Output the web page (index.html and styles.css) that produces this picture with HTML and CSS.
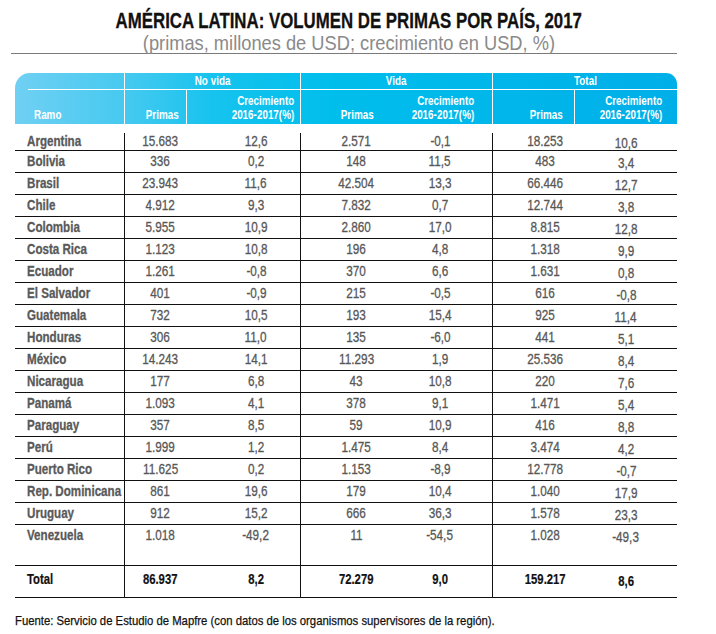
FILE: index.html
```html
<!DOCTYPE html>
<html lang="es">
<head>
<meta charset="utf-8">
<title>América Latina: volumen de primas por país, 2017</title>
<link rel="stylesheet" href="styles.css">
</head>
<body>
<div class="page">
  <header class="title-block">
    <h1 class="title"><span class="t">AMÉRICA LATINA: VOLUMEN DE PRIMAS POR PAÍS, 2017</span></h1>
    <p class="subtitle"><span class="t">(primas, millones de USD; crecimiento en USD, %)</span></p>
  </header>

  <div class="table">
    <div class="thead">
      <div class="h1 h-blank"></div>
      <div class="h1 h-group h-nv"><span class="t">No vida</span></div>
      <div class="h1 h-group h-v"><span class="t">Vida</span></div>
      <div class="h1 h-group h-t"><span class="t">Total</span></div>

      <div class="h2 h-ramo"><span class="t tl">Ramo</span></div>
      <div class="h2 h-div h-prim-nv"><span class="t tr">Primas</span></div>
      <div class="h2 h-div h-crec-nv"><span class="t tr">Crecimiento<br>2016-2017(%)</span></div>
      <div class="h2 h-div h-vida">
        <span class="h-prim-v"><span class="t tr">Primas</span></span>
        <span class="h-crec-v"><span class="t tr">Crecimiento<br>2016-2017(%)</span></span>
      </div>
      <div class="h2 h-div h-prim-t"><span class="t tr">Primas</span></div>
      <div class="h2 h-div h-crec-t"><span class="t tr">Crecimiento<br>2016-2017(%)</span></div>
    </div>

    <div class="tbody">
      <div class="row first"><span class="c name"><span class="t tl">Argentina</span></span><span class="c p1 sep"><span class="t">15.683</span></span><span class="c g1"><span class="t">12,6</span></span><span class="c p2 sep"><span class="t">2.571</span></span><span class="c g2"><span class="t">-0,1</span></span><span class="c p3 sep"><span class="t">18.253</span></span><span class="c g3"><span class="t">10,6</span></span></div>
      <div class="row"><span class="c name"><span class="t tl">Bolivia</span></span><span class="c p1 sep"><span class="t">336</span></span><span class="c g1"><span class="t">0,2</span></span><span class="c p2 sep"><span class="t">148</span></span><span class="c g2"><span class="t">11,5</span></span><span class="c p3 sep"><span class="t">483</span></span><span class="c g3"><span class="t">3,4</span></span></div>
      <div class="row"><span class="c name"><span class="t tl">Brasil</span></span><span class="c p1 sep"><span class="t">23.943</span></span><span class="c g1"><span class="t">11,6</span></span><span class="c p2 sep"><span class="t">42.504</span></span><span class="c g2"><span class="t">13,3</span></span><span class="c p3 sep"><span class="t">66.446</span></span><span class="c g3"><span class="t">12,7</span></span></div>
      <div class="row"><span class="c name"><span class="t tl">Chile</span></span><span class="c p1 sep"><span class="t">4.912</span></span><span class="c g1"><span class="t">9,3</span></span><span class="c p2 sep"><span class="t">7.832</span></span><span class="c g2"><span class="t">0,7</span></span><span class="c p3 sep"><span class="t">12.744</span></span><span class="c g3"><span class="t">3,8</span></span></div>
      <div class="row"><span class="c name"><span class="t tl">Colombia</span></span><span class="c p1 sep"><span class="t">5.955</span></span><span class="c g1"><span class="t">10,9</span></span><span class="c p2 sep"><span class="t">2.860</span></span><span class="c g2"><span class="t">17,0</span></span><span class="c p3 sep"><span class="t">8.815</span></span><span class="c g3"><span class="t">12,8</span></span></div>
      <div class="row"><span class="c name"><span class="t tl">Costa Rica</span></span><span class="c p1 sep"><span class="t">1.123</span></span><span class="c g1"><span class="t">10,8</span></span><span class="c p2 sep"><span class="t">196</span></span><span class="c g2"><span class="t">4,8</span></span><span class="c p3 sep"><span class="t">1.318</span></span><span class="c g3"><span class="t">9,9</span></span></div>
      <div class="row"><span class="c name"><span class="t tl">Ecuador</span></span><span class="c p1 sep"><span class="t">1.261</span></span><span class="c g1"><span class="t">-0,8</span></span><span class="c p2 sep"><span class="t">370</span></span><span class="c g2"><span class="t">6,6</span></span><span class="c p3 sep"><span class="t">1.631</span></span><span class="c g3"><span class="t">0,8</span></span></div>
      <div class="row"><span class="c name"><span class="t tl">El Salvador</span></span><span class="c p1 sep"><span class="t">401</span></span><span class="c g1"><span class="t">-0,9</span></span><span class="c p2 sep"><span class="t">215</span></span><span class="c g2"><span class="t">-0,5</span></span><span class="c p3 sep"><span class="t">616</span></span><span class="c g3"><span class="t">-0,8</span></span></div>
      <div class="row"><span class="c name"><span class="t tl">Guatemala</span></span><span class="c p1 sep"><span class="t">732</span></span><span class="c g1"><span class="t">10,5</span></span><span class="c p2 sep"><span class="t">193</span></span><span class="c g2"><span class="t">15,4</span></span><span class="c p3 sep"><span class="t">925</span></span><span class="c g3"><span class="t">11,4</span></span></div>
      <div class="row"><span class="c name"><span class="t tl">Honduras</span></span><span class="c p1 sep"><span class="t">306</span></span><span class="c g1"><span class="t">11,0</span></span><span class="c p2 sep"><span class="t">135</span></span><span class="c g2"><span class="t">-6,0</span></span><span class="c p3 sep"><span class="t">441</span></span><span class="c g3"><span class="t">5,1</span></span></div>
      <div class="row"><span class="c name"><span class="t tl">México</span></span><span class="c p1 sep"><span class="t">14.243</span></span><span class="c g1"><span class="t">14,1</span></span><span class="c p2 sep"><span class="t">11.293</span></span><span class="c g2"><span class="t">1,9</span></span><span class="c p3 sep"><span class="t">25.536</span></span><span class="c g3"><span class="t">8,4</span></span></div>
      <div class="row"><span class="c name"><span class="t tl">Nicaragua</span></span><span class="c p1 sep"><span class="t">177</span></span><span class="c g1"><span class="t">6,8</span></span><span class="c p2 sep"><span class="t">43</span></span><span class="c g2"><span class="t">10,8</span></span><span class="c p3 sep"><span class="t">220</span></span><span class="c g3"><span class="t">7,6</span></span></div>
      <div class="row"><span class="c name"><span class="t tl">Panamá</span></span><span class="c p1 sep"><span class="t">1.093</span></span><span class="c g1"><span class="t">4,1</span></span><span class="c p2 sep"><span class="t">378</span></span><span class="c g2"><span class="t">9,1</span></span><span class="c p3 sep"><span class="t">1.471</span></span><span class="c g3"><span class="t">5,4</span></span></div>
      <div class="row"><span class="c name"><span class="t tl">Paraguay</span></span><span class="c p1 sep"><span class="t">357</span></span><span class="c g1"><span class="t">8,5</span></span><span class="c p2 sep"><span class="t">59</span></span><span class="c g2"><span class="t">10,9</span></span><span class="c p3 sep"><span class="t">416</span></span><span class="c g3"><span class="t">8,8</span></span></div>
      <div class="row"><span class="c name"><span class="t tl">Perú</span></span><span class="c p1 sep"><span class="t">1.999</span></span><span class="c g1"><span class="t">1,2</span></span><span class="c p2 sep"><span class="t">1.475</span></span><span class="c g2"><span class="t">8,4</span></span><span class="c p3 sep"><span class="t">3.474</span></span><span class="c g3"><span class="t">4,2</span></span></div>
      <div class="row"><span class="c name"><span class="t tl">Puerto Rico</span></span><span class="c p1 sep"><span class="t">11.625</span></span><span class="c g1"><span class="t">0,2</span></span><span class="c p2 sep"><span class="t">1.153</span></span><span class="c g2"><span class="t">-8,9</span></span><span class="c p3 sep"><span class="t">12.778</span></span><span class="c g3"><span class="t">-0,7</span></span></div>
      <div class="row"><span class="c name"><span class="t tl">Rep. Dominicana</span></span><span class="c p1 sep"><span class="t">861</span></span><span class="c g1"><span class="t">19,6</span></span><span class="c p2 sep"><span class="t">179</span></span><span class="c g2"><span class="t">10,4</span></span><span class="c p3 sep"><span class="t">1.040</span></span><span class="c g3"><span class="t">17,9</span></span></div>
      <div class="row"><span class="c name"><span class="t tl">Uruguay</span></span><span class="c p1 sep"><span class="t">912</span></span><span class="c g1"><span class="t">15,2</span></span><span class="c p2 sep"><span class="t">666</span></span><span class="c g2"><span class="t">36,3</span></span><span class="c p3 sep"><span class="t">1.578</span></span><span class="c g3"><span class="t">23,3</span></span></div>
      <div class="row tall"><span class="c name"><span class="t tl">Venezuela</span></span><span class="c p1 sep"><span class="t">1.018</span></span><span class="c g1"><span class="t">-49,2</span></span><span class="c p2 sep"><span class="t">11</span></span><span class="c g2"><span class="t">-54,5</span></span><span class="c p3 sep"><span class="t">1.028</span></span><span class="c g3"><span class="t">-49,3</span></span></div>
      <div class="row total"><span class="c name"><span class="t tl">Total</span></span><span class="c p1 sep"><span class="t">86.937</span></span><span class="c g1"><span class="t">8,2</span></span><span class="c p2 sep"><span class="t">72.279</span></span><span class="c g2"><span class="t">9,0</span></span><span class="c p3 sep"><span class="t">159.217</span></span><span class="c g3"><span class="t">8,6</span></span></div>
    </div>
  </div>

  <p class="source"><span class="t tl">Fuente: Servicio de Estudio de Mapfre (con datos de los organismos supervisores de la región).</span></p>
</div>
</body>
</html>
```

FILE: styles.css
```css
* { box-sizing: border-box; }

html, body {
  margin: 0;
  padding: 0;
  background: #ffffff;
}

body {
  font-family: "Liberation Sans", Arial, sans-serif;
  color: #575757;
}

/* condensed look: horizontal squeeze of Arial-metric glyphs */
.t {
  display: inline-block;
  white-space: nowrap;
  transform: scaleX(0.82);
  transform-origin: 50% 50%;
}
.tl { transform-origin: 0 50%; }
.tr { transform-origin: 100% 50%; }

.page {
  width: 716px;
  height: 634px;
  padding-top: 9px;
}

.title-block {
  margin-left: 11px;
  width: 666px;
  border-bottom: 1px solid #7a7a7a;
  text-align: center;
  padding-left: 10px;
}

.title {
  margin: 0;
  font-size: 22px;
  line-height: 23px;
  height: 23px;
  font-weight: 700;
  color: #111111;
  -webkit-text-stroke: 0.3px #111111;
}

.title .t { transform: scaleX(0.765); }

.subtitle {
  margin: 0;
  font-size: 21px;
  line-height: 21px;
  height: 21px;
  font-weight: 400;
  color: #8a8a8a;
}

.subtitle .t { transform: scaleX(0.87); }

.table {
  margin-left: 15px;
  margin-top: 19px;
  width: 662px;
}

/* ---------- header ---------- */
.thead {
  display: grid;
  grid-template-columns: 109px 62px 114px 192px 82px 103px;
  grid-template-rows: 17px 34px;
  background: linear-gradient(to right, #70d0f3 0%, #45c9f0 17%, #16c3ee 30%, #00beec 48%, #00b6ea 75%, #00afe8 100%);
  border-radius: 15px 11px 0 0;
  color: #ffffff;
  font-weight: 700;
  font-size: 12.5px;
}

.thead .t { transform: scaleX(0.79); }
.thead .tr { transform-origin: 100% 50%; }
.thead .tl { transform-origin: 0 50%; }

.h1 {
  border-bottom: 1px solid #ffffff;
  text-align: center;
  line-height: 16px;
}

.h-blank {
  border-bottom: none;
  background: linear-gradient(#ffffff, #ffffff) no-repeat 13px 100% / calc(100% - 13px) 1px;
}

.h-group { border-left: 1px solid #ffffff; }
.h-nv { grid-column: 2 / 4; }
.h-v { grid-column: 4 / 5; }
.h-t { grid-column: 5 / 7; }

.h2 {
  display: flex;
  flex-direction: column;
  justify-content: flex-end;
  align-items: flex-end;
  text-align: right;
  line-height: 14px;
  padding-bottom: 2px;
}

.h-div { border-left: 1px solid #ffffff; }

.h-ramo {
  align-items: flex-start;
  text-align: left;
  padding-left: 19px;
}

.h-prim-nv { padding-right: 7px; }
.h-crec-nv { padding-right: 6px; }
.h-prim-t { padding-right: 11px; }
.h-crec-t { padding-right: 15px; }

.h-vida {
  flex-direction: row;
  align-items: flex-end;
  justify-content: flex-start;
}

.h-prim-v {
  width: 73px;
  text-align: right;
}

.h-crec-v {
  width: 100px;
  text-align: right;
}

/* ---------- body ---------- */
.tbody {
  margin-top: 9px;
}

.row {
  display: grid;
  grid-template-columns: 109px 72px 104px 112px 80px 106px 79px;
  height: 22px;
  border-bottom: 1px solid #111111;
  font-size: 14.5px;
  line-height: 21px;
  -webkit-text-stroke: 0.3px #575757;
}

.row .t { transform: scaleX(0.81); }
.row .name .t { transform: scaleX(0.8); transform-origin: 0 50%; }

.row.first {
  height: 18px;
  line-height: 14px;
}

.row.first .c { padding-top: 1px; }
.row.first .g3 { padding-top: 3px; }

.row.tall {
  height: 41px;
}

.row.total {
  height: 32px;
  line-height: 19px;
  color: #111111;
  font-weight: 700;
  -webkit-text-stroke: 0.2px #111111;
}

.row.total .t { transform: scaleX(0.78); }
.row.total .name .t { transform: scaleX(0.78); transform-origin: 0 50%; }
.row.total .c { padding-top: 4px; }
.row.total .g3 { padding-top: 6px; }

.c {
  display: block;
  text-align: center;
  white-space: nowrap;
}

.sep { border-left: 1px solid #111111; }

.name {
  text-align: left;
  padding-left: 12px;
  font-weight: 700;
  color: #5a5a5a;
}

.row.total .name { color: #111111; }

.g1 { padding-left: 16px; }
.g2 { padding-right: 24px; }
.g3 { padding-right: 23px; padding-top: 2px; }

.source {
  margin: 16px 0 0 15px;
  font-size: 13px;
  line-height: 14px;
  color: #111111;
  -webkit-text-stroke: 0.25px #111111;
}

.source .t { transform: scaleX(0.87); }
```
